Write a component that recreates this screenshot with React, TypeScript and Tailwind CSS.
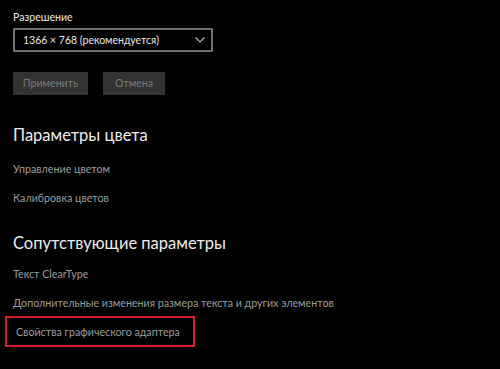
export default function App() {
  return (
    <div className="h-[369px] w-[500px] overflow-hidden bg-black pl-[13px] font-['Lato',sans-serif] text-[#e8e8e8]">
      <div className="pt-[8px] text-[10.6px] leading-[18px]">Разрешение</div>

      <div className="mt-[2px] flex h-[24px] w-[200px] items-center justify-between border-2 border-[#6e6e6e] pl-[8px] pr-[6px]">
        <span className="text-[10.5px] leading-none">1366 × 768 (рекомендуется)</span>
        <svg width="10" height="6" viewBox="0 0 10 6" fill="none" stroke="#bdbdbd" strokeWidth="1.1">
          <path d="M0.5 0.5 L5 5 L9.5 0.5" />
        </svg>
      </div>

      <div className="mt-[20px] flex gap-[15px]">
        <button className="h-[23px] w-[75px] bg-[#333333] text-[10.6px] text-[#7a7a7a]">Применить</button>
        <button className="h-[23px] w-[62px] bg-[#333333] text-[10.6px] text-[#7a7a7a]">Отмена</button>
      </div>

      <h2 className="mt-[27px] text-[16.5px] leading-[26px] font-normal text-[#ececec]">Параметры цвета</h2>
      <div className="mt-[12px] flex flex-col gap-[11px] text-[10.7px] leading-[18px] text-[#9c9c9c]">
        <span>Управление цветом</span>
        <span>Калибровка цветов</span>
      </div>

      <h2 className="mt-[23px] text-[16.5px] leading-[26px] font-normal text-[#ececec]">Сопутствующие параметры</h2>
      <div className="mt-[9px] flex flex-col text-[10.7px] leading-[18px] text-[#9c9c9c]">
        <span>Текст ClearType</span>
        <span className="mt-[11px] whitespace-nowrap">Дополнительные изменения размера текста и других элементов</span>
        <div className="mt-[4px] -ml-[8px] flex h-[31px] w-[190px] items-center border-2 border-[#d11f2b] pl-[9px]">
          <span className="whitespace-nowrap">Свойства графического адаптера</span>
        </div>
      </div>
    </div>
  )
}
